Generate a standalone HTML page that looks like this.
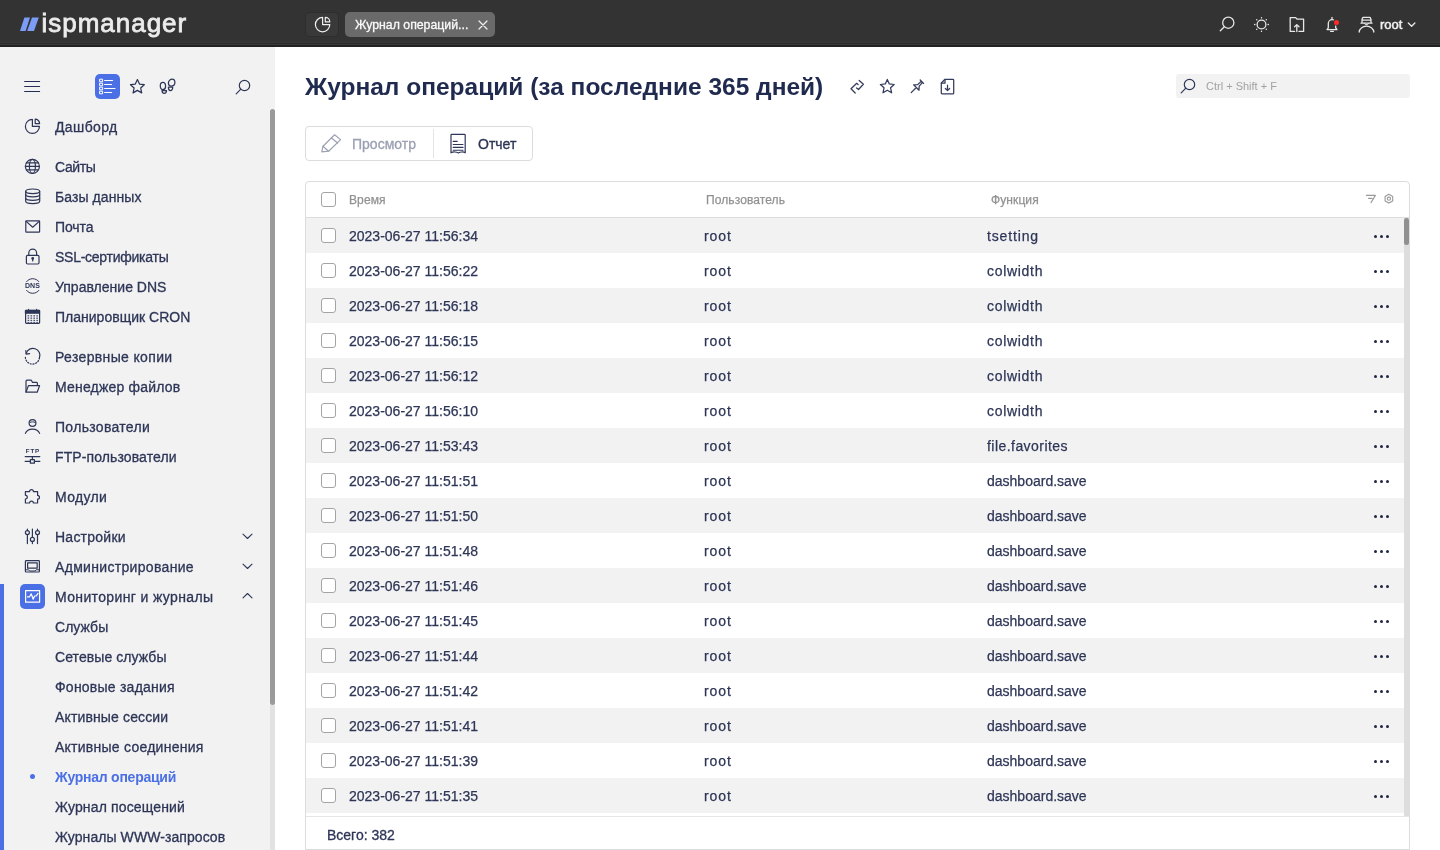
<!DOCTYPE html>
<html><head><meta charset="utf-8"><title>ispmanager</title><style>
*{box-sizing:border-box}
html,body{margin:0;padding:0;width:1440px;height:850px;overflow:hidden;background:#fff;font-family:"Liberation Sans",sans-serif}
#root{position:absolute;left:0;top:0;width:1440px;height:850px;overflow:hidden;background:#fff;will-change:transform}
#hdr{position:absolute;left:0;top:0;width:1440px;height:47px;background:linear-gradient(to bottom,#333333 0,#333333 42px,#383838 42px,#383838 43px,#2a2a2a 43px,#2a2a2a 44px,#3a3a3a 44px,#3a3a3a 45px,#222222 45px,#222222 47px)}

#logo{position:absolute;left:41.5px;top:5.5px;-webkit-text-stroke:.8px #ececec;font-size:26px;line-height:34px;color:#ececec;letter-spacing:.98px}
#dashbtn{position:absolute;left:306px;top:13px;width:32px;height:23px;border-radius:4px;background:#393939;box-shadow:0 0 0 1px #2e2e2e}
#tab{position:absolute;left:345px;top:12px;width:150px;height:25px;border-radius:5px;background:#6a6a6a}
#tab span{position:absolute;left:10px;top:1px;line-height:25px;font-size:12.3px;color:#fafafa;-webkit-text-stroke:.3px #fafafa}
#uroot{position:absolute;left:1380px;top:16px;line-height:18px;font-size:13px;color:#f0f0f0;-webkit-text-stroke:.5px #f0f0f0}
#side{position:absolute;left:0;top:47px;width:275px;height:803px;background:#f2f2f2}
.mi{position:absolute;left:55px;height:30px;line-height:30px;font-size:14px;color:#2e3657;white-space:nowrap;margin-top:-46px;letter-spacing:.15px;-webkit-text-stroke:.3px #2e3657}
.mi.act{color:#4b6fe4;font-weight:bold;letter-spacing:-.25px;-webkit-text-stroke:0}
#side > svg, #side > div:not(.mi){margin-top:-47px}
.dnsic{position:absolute;left:24.5px;width:16px;font-size:7px;line-height:16px;font-weight:bold;text-align:center;color:#2e3657;letter-spacing:.1px}
.ftpic{position:absolute;left:24.5px;width:16px;font-size:6.2px;line-height:8px;font-weight:bold;text-align:center;color:#2e3657;letter-spacing:.8px;padding-left:.8px}
#title{position:absolute;left:305px;top:71px;font-size:24.5px;line-height:32px;font-weight:bold;color:#1f2a4e;white-space:nowrap}
#srch{position:absolute;left:1176px;top:74px;width:234px;height:24px;border-radius:3px;background:#f2f2f2}
#srch span{position:absolute;left:30px;top:0;line-height:24px;font-size:11px;color:#a2a2a2}
#tb{position:absolute;left:305px;top:126px;width:228px;height:35px;border:1px solid #dcdcdc;border-radius:4px;background:#fff}
#tbdiv{position:absolute;left:127px;top:2px;width:1px;height:29px;background:#e4e4e4}
#b1{position:absolute;left:46px;top:1px;-webkit-text-stroke:.3px #9aa0b2;line-height:33px;font-size:14px;color:#9aa0b2}
#b2{position:absolute;left:172px;top:1px;-webkit-text-stroke:.35px #2e3657;line-height:33px;font-size:14px;color:#2e3657}
#tbl{position:absolute;left:305px;top:181px;width:1105px;height:669px;border:1px solid #dcdcdc;border-radius:4px 4px 0 0;background:#fff}
#thd{position:absolute;left:0;top:35px;width:1103px;height:1px;background:#dcdcdc}
.th{position:absolute;top:1px;line-height:35px;font-size:12px;color:#929292;white-space:nowrap;letter-spacing:.1px;-webkit-text-stroke:.25px #929292}
.cb{position:absolute;width:15px;height:15px;border:1px solid #a4a4a4;border-radius:3px;background:#fff}
.row{position:absolute;left:0;width:1098px;height:35px}
.td{position:absolute;top:.5px;line-height:35px;-webkit-text-stroke:.25px #2e3657;font-size:14px;color:#2e3657;white-space:nowrap}
.dots{position:absolute;left:1068px;top:16.5px;width:18px;height:4px}
.dots i{position:absolute;top:.2px;width:3.2px;height:3.2px;border-radius:50%;background:#1f2746}
.dots i:nth-child(1){left:.2px}.dots i:nth-child(2){left:6.2px}.dots i:nth-child(3){left:12.2px}
#vsb{position:absolute;left:1098px;top:36px;width:5px;height:598px;background:#dddddd}
#vthumb{position:absolute;left:1098px;top:36px;width:5px;height:27px;border-radius:2.5px;background:#909090}
#tfoot{position:absolute;left:0;top:634px;width:1103px;height:1px;background:#e6e6e6}
#total{position:absolute;left:21px;top:638px;-webkit-text-stroke:.3px #2e3657;line-height:30px;font-size:14px;color:#2e3657}
</style></head>
<body><div id="root">
<div id="hdr"><svg style="position:absolute;left:15px;top:12px" width="30" height="24" viewBox="15 12 30 24"><path d="M24.4 17.4H30L25.6 31.1H20Z" fill="#7b9df8"/><path d="M32 17.4H38.8L34 31.1H27.2Z" fill="#7b9df8"/></svg><div id="logo">ispmanager</div><div id="dashbtn"></div><svg style="position:absolute;left:300px;top:8px" width="40" height="32" viewBox="300 8 40 32" fill="none" stroke="#f0f0f0" stroke-width="1.2" stroke-linejoin="round"><path d="M322.6 17.4A7.2 7.2 0 1 0 329.8 24.6H322.6Z"/><path d="M325.3 21.9V17.4A4.5 4.5 0 0 1 329.8 21.9Z"/></svg><div id="tab"><span>Журнал операций...</span></div><svg style="position:absolute;left:478px;top:20px" width="10" height="10" viewBox="0 0 10 10" fill="none" stroke="#f0f0f0" stroke-width="1.2" stroke-linecap="round" stroke-linejoin="round" ><path d="M1 1l8 8M9 1l-8 8"/></svg><svg style="position:absolute;left:1210px;top:8px" width="220" height="32" viewBox="1210 8 220 32" fill="none" stroke="#e8e8e8" stroke-width="1.3" stroke-linecap="round" stroke-linejoin="round"><circle cx="1228.3" cy="22.7" r="5.6"/><path d="M1224.3 26.7L1220.3 30.8"/><circle cx="1261.5" cy="24.5" r="4.4"/><path d="M1261.5 17.6v.3M1261.5 31.1v.3M1254.6 24.5h.3M1268.1 24.5h.3M1256.6 19.6l.2.2M1266.2 29.2l.2.2M1266.4 19.6l-.2.2M1256.8 29.2l-.2.2"/><path d="M1294.6 31.4H1290.2V17.6H1295.6L1297.2 19.2H1303.6V31.4H1299"/><path d="M1296.8 31.6V24.6M1294.6 26.8L1296.8 24.6L1299 26.8"/><path d="M1327 29.6L1328.3 27.8V23.6A3.7 3.9 0 0 1 1335.7 23.6V27.8L1337 29.6Z"/><path d="M1330.6 31.3H1333.4M1332 17.4V19"/><path d="M1362 23.2V19.4L1363 17.3H1370L1371 19.4V23.2M1361 23.2H1372M1362 20.2H1371"/><path d="M1364.5 23.2L1365.3 24.6H1367.7L1368.5 23.2" stroke-width="1"/><path d="M1359.2 32A7.3 5.8 0 0 1 1373.8 32"/><path d="M1408.3 23L1411.6 26.3L1414.9 23"/></svg><div style="position:absolute;left:1333.5px;top:19.5px;width:5.4px;height:5.4px;border-radius:50%;background:#ff2a2a;box-shadow:0 0 0 .8px #333"></div><div id="uroot">root</div></div><div id="side"><svg style="position:absolute;left:20px;top:76px;margin-top:-47px" width="25" height="20" viewBox="20 76 25 20" fill="none" stroke="#262c52" stroke-width="1.1" stroke-linecap="round"><path d="M24.6 81.5H39.6M24.6 86.5H39.6M24.6 91.5H39.6"/></svg><div style="position:absolute;left:95px;top:74px;width:25px;height:25px;border-radius:5px;background:#4b6fe4"></div><svg style="position:absolute;left:90px;top:68px;margin-top:-47px" width="95" height="36" viewBox="90 68 95 36" fill="none" stroke-linecap="round" stroke-linejoin="round"><g stroke="#ffffff" stroke-width="1"><rect x="100" y="79.2" width="2.6" height="2.6"/><rect x="100" y="83.2" width="2.6" height="2.6"/><rect x="100" y="87.2" width="2.6" height="2.6"/><rect x="100" y="91.2" width="2.6" height="2.6"/></g><g stroke="#ffffff" stroke-width="1.1"><path d="M104.6 80.5H112.6M104.6 84.5H111.6M104.6 88.5H115M104.6 92.5H111.6"/></g><g stroke="#2e3657" stroke-width="1.25"><path d="M137.4 79.6L139.5 84.1L144.3 84.7L140.7 88L141.7 92.9L137.4 90.4L133.1 92.9L134.1 88L130.5 84.7L135.3 84.1Z"/><path d="M160.3 85.8C160.3 83.6 161.5 82.3 162.9 82.3C164.4 82.3 165.6 83.8 165.6 86.3C165.6 88.3 165 89.6 163 89.6C161.1 89.6 160.3 88.2 160.3 85.8Z"/><path d="M162 90.6H166.5C166.5 92.4 165.6 93.4 164.2 93.4C162.8 93.4 162 92.4 162 90.6Z"/><path d="M174.9 82.4C174.9 80.3 173.8 79 172.2 79C170.6 79 168.4 80.6 168.4 83.1C168.4 85 169.2 86 171 86C173.4 86 174.9 84.6 174.9 82.4Z"/><path d="M168.4 87.2H172.7C172.8 89.2 171.8 90.6 170.4 90.6C169 90.6 168.4 89.2 168.4 87.2Z"/></g></svg><svg style="position:absolute;left:235px;top:79px" width="16" height="16" viewBox="0 0 16 16" fill="none" stroke="#2e3657" stroke-width="1.2" stroke-linecap="round" stroke-linejoin="round" ><circle cx="9.5" cy="6.5" r="5.2"/><path d="M5.8 10.2L1.2 14.8"/></svg><div class="mi" style="top:111px;letter-spacing:0.39px">Дашборд</div><div class="mi" style="top:151px;letter-spacing:-0.39px">Сайты</div><div class="mi" style="top:181px;letter-spacing:0.08px">Базы данных</div><div class="mi" style="top:211px;letter-spacing:-0.1px">Почта</div><div class="mi" style="top:241px;letter-spacing:-0.26px">SSL-сертификаты</div><div class="mi" style="top:271px;letter-spacing:0.01px">Управление DNS</div><div class="mi" style="top:301px;letter-spacing:0.01px">Планировщик CRON</div><div class="mi" style="top:341px;letter-spacing:0.35px">Резервные копии</div><div class="mi" style="top:371px;letter-spacing:0.2px">Менеджер файлов</div><div class="mi" style="top:411px;letter-spacing:0.31px">Пользователи</div><div class="mi" style="top:441px;letter-spacing:0.1px">FTP-пользователи</div><div class="mi" style="top:481px;letter-spacing:0.32px">Модули</div><div class="mi" style="top:521px;letter-spacing:0.24px">Настройки</div><svg style="position:absolute;left:242px;top:533px" width="11" height="7" viewBox="0 0 11 7" fill="none" stroke="#2e3657" stroke-width="1.1" stroke-linecap="round" stroke-linejoin="round" ><path d="M1 1.2l4.5 4.3 4.5-4.3"/></svg><div class="mi" style="top:551px;letter-spacing:0.32px">Администрирование</div><svg style="position:absolute;left:242px;top:563px" width="11" height="7" viewBox="0 0 11 7" fill="none" stroke="#2e3657" stroke-width="1.1" stroke-linecap="round" stroke-linejoin="round" ><path d="M1 1.2l4.5 4.3 4.5-4.3"/></svg><div class="mi" style="top:581px;letter-spacing:0.36px">Мониторинг и журналы</div><div style="position:absolute;left:20px;top:584px;width:25px;height:25px;border-radius:5px;background:#4b6fe4"></div><svg style="position:absolute;left:242px;top:592px" width="11" height="7" viewBox="0 0 11 7" fill="none" stroke="#2e3657" stroke-width="1.1" stroke-linecap="round" stroke-linejoin="round" ><path d="M1 5.8l4.5-4.3 4.5 4.3"/></svg><div class="mi" style="top:611px;letter-spacing:0.04px">Службы</div><div class="mi" style="top:641px;letter-spacing:0.07px">Сетевые службы</div><div class="mi" style="top:671px;letter-spacing:0.23px">Фоновые задания</div><div class="mi" style="top:701px;letter-spacing:0.14px">Активные сессии</div><div class="mi" style="top:731px;letter-spacing:0.25px">Активные соединения</div><div class="mi act" style="top:761px;letter-spacing:-0.25px">Журнал операций</div><div class="mi" style="top:791px;letter-spacing:0.15px">Журнал посещений</div><div class="mi" style="top:821px;letter-spacing:0.07px">Журналы WWW-запросов</div><div style="position:absolute;left:30px;top:774px;width:5px;height:5px;border-radius:50%;background:#4b6fe4"></div><div style="position:absolute;left:0;top:584px;width:4px;height:266px;background:#4b6fe4"></div><div style="position:absolute;left:270px;top:705px;width:5px;height:145px;background:#e2e2e2"></div><div style="position:absolute;left:270px;top:109px;width:5px;height:596px;border-radius:2.5px;background:#9a9a9a"></div></div><svg style="position:absolute;left:0;top:0" width="275" height="850" viewBox="0 0 275 850" fill="none" stroke="#2e3657" stroke-width="1.2" stroke-linecap="round" stroke-linejoin="round"><path d="M32.4 119.4A7 7 0 1 0 39.4 126.4H32.4Z"/><path d="M35.2 123.6V119.2A4.4 4.4 0 0 1 39.6 123.6Z"/><circle cx="32.4" cy="166.4" r="7"/><ellipse cx="32.4" cy="166.4" rx="3" ry="7"/><path d="M25.4 166.4H39.4M26.4 162.9H38.4M26.4 169.9H38.4"/><ellipse cx="32.7" cy="191.3" rx="7" ry="2.3"/><path d="M25.7 191.3V201.3C25.7 202.6 28.8 203.6 32.7 203.6S39.7 202.6 39.7 201.3V191.3"/><path d="M25.7 194.6C25.7 195.9 28.8 196.9 32.7 196.9S39.7 195.9 39.7 194.6M25.7 198C25.7 199.3 28.8 200.3 32.7 200.3S39.7 199.3 39.7 198"/><rect x="25.8" y="220.8" width="13.8" height="11.4" rx=".6"/><path d="M26.2 221.4L32.7 227.2L39.2 221.4"/><rect x="26.4" y="255.4" width="12.6" height="8.6" rx="1.2"/><path d="M28.8 255.4V253A3.9 3.9 0 0 1 36.6 253V255.4"/><path d="M32.7 258.6V261"/><circle cx="32.7" cy="258.4" r=".8" fill="#2e3657"/><path d="M26.6 281.6A7.2 6.6 0 0 1 38.8 281.6M26.6 290.4A7.2 6.6 0 0 0 38.8 290.4" stroke-width="1"/><rect x="25.6" y="310.3" width="14" height="13" rx=".8"/><rect x="25.6" y="310.3" width="14" height="3.2" fill="#2e3657" stroke-width=".6"/><path d="M28.6 309.4V310.6M36.6 309.4V310.6" stroke-width="1.1"/><g fill="#4a5070" stroke="none"><rect x="27.6" y="315.2" width="1.6" height="1.3"/><rect x="30.5" y="315.2" width="1.6" height="1.3"/><rect x="33.4" y="315.2" width="1.6" height="1.3"/><rect x="36.3" y="315.2" width="1.6" height="1.3"/><rect x="27.6" y="317.5" width="1.6" height="1.3"/><rect x="30.5" y="317.5" width="1.6" height="1.3"/><rect x="33.4" y="317.5" width="1.6" height="1.3"/><rect x="36.3" y="317.5" width="1.6" height="1.3"/><rect x="27.6" y="319.8" width="1.6" height="1.3"/><rect x="30.5" y="319.8" width="1.6" height="1.3"/><rect x="33.4" y="319.8" width="1.6" height="1.3"/><rect x="36.3" y="319.8" width="1.6" height="1.3"/><rect x="27.6" y="322.0" width="1.6" height="1.3"/><rect x="30.5" y="322.0" width="1.6" height="1.3"/><rect x="33.4" y="322.0" width="1.6" height="1.3"/><rect x="36.3" y="322.0" width="1.6" height="1.3"/></g><path d="M26.2 353.4A7 7 0 1 1 39.4 358" /><path d="M39.4 358A7 7 0 0 1 25.4 356" stroke-dasharray="1.1 1.7"/><path d="M25.8 350.6L26.2 354.2L29.6 353.6"/><path d="M26 392V381.2C26 380.6 26.4 380.2 27 380.2H31.2L32.6 382.4H36.6C37.2 382.4 37.4 382.8 37.4 383.4V385.2"/><path d="M26 392.2L28.4 385.6H39.6L37.2 392.2Z"/><circle cx="32.5" cy="423" r="3.4"/><path d="M25.4 433.4A7.4 6 0 0 1 39.6 433.4"/><path d="M30 422.4C31.5 421.6 33.5 421.6 35 422.4" stroke-width="1"/><path d="M25.2 456.6H39.8M25.2 461.4H30.4M34.4 461.4H39.8M32.4 456.6V459.6"/><rect x="30.4" y="459.6" width="4" height="3.6"/><path d="M25.4 491.6H29.6A1.9 1.9 0 1 1 33.4 491.6H37.6V495.4A1.9 1.9 0 1 1 37.6 499.2V503H33.4A1.9 1.9 0 1 0 29.6 503H25.4V499A1.9 1.9 0 1 0 25.4 495.2Z"/><path d="M27.4 529V530.6M27.4 534.6V543.6M32.4 529V537.4M32.4 541.4V543.6M37.5 529V530.6M37.5 534.6V543.6"/><circle cx="27.4" cy="532.6" r="2"/><circle cx="32.4" cy="539.4" r="2"/><circle cx="37.5" cy="532.6" r="2"/><rect x="25.4" y="560.6" width="14" height="11.4" rx=".8"/><rect x="27.6" y="562.8" width="9.6" height="5.4"/><path d="M25.4 569.8H28.6L29.6 571H35.2L36.2 569.8H39.4" stroke-width="1"/><g stroke="#ffffff" stroke-width="1.2"><rect x="25.6" y="590.6" width="14" height="11.6"/><path d="M27.4 596.8H29.6L31.2 593.8L33.2 599.2L34.6 596H36.2L38 593.4"/></g></svg><div class="dnsic" style="top:278px">DNS</div><div class="ftpic" style="top:447px">FTP</div><div id="title">Журнал операций (за последние 365 дней)</div><svg style="position:absolute;left:840px;top:70px" width="125" height="30" viewBox="840 70 125 30" fill="none" stroke="#333b5c" stroke-width="1.25" stroke-linecap="round" stroke-linejoin="round"><path d="M858.2 84.6L856.7 83.3L851 88.8L855.2 93"/><path d="M859.2 80.5L863.4 84.3L858.5 89.5L856.6 88"/><path d="M887.3 79.4L889.3 83.9L894.2 84.5L890.6 87.8L891.6 92.8L887.3 90.3L883 92.8L884 87.8L880.4 84.5L885.3 83.9Z"/><path d="M920.2 80L923.6 83.4M921.4 81.2L917.6 84.6L913.6 84.8L919 90.2L919.2 86.2L922.6 82.4M916.3 87.5L911.2 92.6"/><path d="M945 79.3H952.8A.9 .9 0 0 1 953.7 80.2V92.9A.9 .9 0 0 1 952.8 93.8H942.2A.9 .9 0 0 1 941.3 92.9V83Z"/><path d="M945 79.5V83.2H941.4"/><path d="M947.5 85.2V90.5M945.4 88.5L947.5 90.6L949.6 88.5"/></svg><div id="srch"><span>Ctrl + Shift + F</span></div><svg style="position:absolute;left:1180px;top:78px" width="16" height="16" viewBox="0 0 16 16" fill="none" stroke="#2e3657" stroke-width="1.2" stroke-linecap="round" stroke-linejoin="round" ><circle cx="9.5" cy="6.5" r="5.2"/><path d="M5.8 10.2L1.2 14.8"/></svg><div id="tb"><div id="tbdiv"></div><span id="b1">Просмотр</span><span id="b2">Отчет</span></div><svg style="position:absolute;left:315px;top:128px" width="160" height="30" viewBox="315 128 160 30" fill="none" stroke-linecap="round" stroke-linejoin="round"><g stroke="#9da2b3" stroke-width="1.2"><path d="M321.8 151.8L323 146.2L334.6 134.8L340.6 139.6L328.6 151.2Z"/><path d="M323 146.2L328.6 151.2M331.4 138L337.6 143"/></g><g stroke="#2e3657" stroke-width="1.2"><path d="M451 152.8V135.2Q451 134.4 451.8 134.4H464.4Q465.2 134.4 465.2 135.2V152.8Q463.6 151.8 461.8 152Q459.8 152.2 458.4 153Q456.8 152.2 455 152Q452.8 151.8 451 152.8Z"/><path d="M453.2 141.4H457.2M453.2 144.5H463M453.2 147.4H463M453.2 150.3H463" stroke-width="1.1"/></g></svg><div id="tbl"><div id="thd"></div><div class="cb" style="left:15px;top:10px"></div><div class="th" style="left:43px">Время</div><div class="th" style="left:400px">Пользователь</div><div class="th" style="left:685px">Функция</div><svg style="position:absolute;left:1054px;top:4px" width="40" height="25" viewBox="1360 186 40 25" fill="none" stroke="#999999" stroke-width="1.1" stroke-linecap="round" stroke-linejoin="round"><path d="M1366.4 195.4H1375.4L1371 202.6M1368.6 198.4H1372"/><path d="M1388.9 194.3L1392.7 196.5V200.9L1388.9 203.1L1385.1 200.9V196.5Z"/><circle cx="1388.9" cy="198.7" r="1.6"/></svg><div class="row" style="top:36px;background:#f2f2f2"><div class="cb" style="left:15px;top:10px"></div><div class="td" style="left:43px">2023-06-27 11:56:34</div><div class="td" style="left:398px;letter-spacing:.9px">root</div><div class="td" style="left:681px;letter-spacing:0.85px">tsetting</div><div class="dots"><i></i><i></i><i></i></div></div><div class="row" style="top:71px;background:#ffffff"><div class="cb" style="left:15px;top:10px"></div><div class="td" style="left:43px">2023-06-27 11:56:22</div><div class="td" style="left:398px;letter-spacing:.9px">root</div><div class="td" style="left:681px;letter-spacing:0.7px">colwidth</div><div class="dots"><i></i><i></i><i></i></div></div><div class="row" style="top:106px;background:#f2f2f2"><div class="cb" style="left:15px;top:10px"></div><div class="td" style="left:43px">2023-06-27 11:56:18</div><div class="td" style="left:398px;letter-spacing:.9px">root</div><div class="td" style="left:681px;letter-spacing:0.7px">colwidth</div><div class="dots"><i></i><i></i><i></i></div></div><div class="row" style="top:141px;background:#ffffff"><div class="cb" style="left:15px;top:10px"></div><div class="td" style="left:43px">2023-06-27 11:56:15</div><div class="td" style="left:398px;letter-spacing:.9px">root</div><div class="td" style="left:681px;letter-spacing:0.7px">colwidth</div><div class="dots"><i></i><i></i><i></i></div></div><div class="row" style="top:176px;background:#f2f2f2"><div class="cb" style="left:15px;top:10px"></div><div class="td" style="left:43px">2023-06-27 11:56:12</div><div class="td" style="left:398px;letter-spacing:.9px">root</div><div class="td" style="left:681px;letter-spacing:0.7px">colwidth</div><div class="dots"><i></i><i></i><i></i></div></div><div class="row" style="top:211px;background:#ffffff"><div class="cb" style="left:15px;top:10px"></div><div class="td" style="left:43px">2023-06-27 11:56:10</div><div class="td" style="left:398px;letter-spacing:.9px">root</div><div class="td" style="left:681px;letter-spacing:0.7px">colwidth</div><div class="dots"><i></i><i></i><i></i></div></div><div class="row" style="top:246px;background:#f2f2f2"><div class="cb" style="left:15px;top:10px"></div><div class="td" style="left:43px">2023-06-27 11:53:43</div><div class="td" style="left:398px;letter-spacing:.9px">root</div><div class="td" style="left:681px;letter-spacing:0.45px">file.favorites</div><div class="dots"><i></i><i></i><i></i></div></div><div class="row" style="top:281px;background:#ffffff"><div class="cb" style="left:15px;top:10px"></div><div class="td" style="left:43px">2023-06-27 11:51:51</div><div class="td" style="left:398px;letter-spacing:.9px">root</div><div class="td" style="left:681px;letter-spacing:0px">dashboard.save</div><div class="dots"><i></i><i></i><i></i></div></div><div class="row" style="top:316px;background:#f2f2f2"><div class="cb" style="left:15px;top:10px"></div><div class="td" style="left:43px">2023-06-27 11:51:50</div><div class="td" style="left:398px;letter-spacing:.9px">root</div><div class="td" style="left:681px;letter-spacing:0px">dashboard.save</div><div class="dots"><i></i><i></i><i></i></div></div><div class="row" style="top:351px;background:#ffffff"><div class="cb" style="left:15px;top:10px"></div><div class="td" style="left:43px">2023-06-27 11:51:48</div><div class="td" style="left:398px;letter-spacing:.9px">root</div><div class="td" style="left:681px;letter-spacing:0px">dashboard.save</div><div class="dots"><i></i><i></i><i></i></div></div><div class="row" style="top:386px;background:#f2f2f2"><div class="cb" style="left:15px;top:10px"></div><div class="td" style="left:43px">2023-06-27 11:51:46</div><div class="td" style="left:398px;letter-spacing:.9px">root</div><div class="td" style="left:681px;letter-spacing:0px">dashboard.save</div><div class="dots"><i></i><i></i><i></i></div></div><div class="row" style="top:421px;background:#ffffff"><div class="cb" style="left:15px;top:10px"></div><div class="td" style="left:43px">2023-06-27 11:51:45</div><div class="td" style="left:398px;letter-spacing:.9px">root</div><div class="td" style="left:681px;letter-spacing:0px">dashboard.save</div><div class="dots"><i></i><i></i><i></i></div></div><div class="row" style="top:456px;background:#f2f2f2"><div class="cb" style="left:15px;top:10px"></div><div class="td" style="left:43px">2023-06-27 11:51:44</div><div class="td" style="left:398px;letter-spacing:.9px">root</div><div class="td" style="left:681px;letter-spacing:0px">dashboard.save</div><div class="dots"><i></i><i></i><i></i></div></div><div class="row" style="top:491px;background:#ffffff"><div class="cb" style="left:15px;top:10px"></div><div class="td" style="left:43px">2023-06-27 11:51:42</div><div class="td" style="left:398px;letter-spacing:.9px">root</div><div class="td" style="left:681px;letter-spacing:0px">dashboard.save</div><div class="dots"><i></i><i></i><i></i></div></div><div class="row" style="top:526px;background:#f2f2f2"><div class="cb" style="left:15px;top:10px"></div><div class="td" style="left:43px">2023-06-27 11:51:41</div><div class="td" style="left:398px;letter-spacing:.9px">root</div><div class="td" style="left:681px;letter-spacing:0px">dashboard.save</div><div class="dots"><i></i><i></i><i></i></div></div><div class="row" style="top:561px;background:#ffffff"><div class="cb" style="left:15px;top:10px"></div><div class="td" style="left:43px">2023-06-27 11:51:39</div><div class="td" style="left:398px;letter-spacing:.9px">root</div><div class="td" style="left:681px;letter-spacing:0px">dashboard.save</div><div class="dots"><i></i><i></i><i></i></div></div><div class="row" style="top:596px;background:#f2f2f2"><div class="cb" style="left:15px;top:10px"></div><div class="td" style="left:43px">2023-06-27 11:51:35</div><div class="td" style="left:398px;letter-spacing:.9px">root</div><div class="td" style="left:681px;letter-spacing:0px">dashboard.save</div><div class="dots"><i></i><i></i><i></i></div></div><div id="vsb"></div><div id="vthumb"></div><div id="tfoot"></div><div id="total">Всего: 382</div></div>
</div></body></html>
